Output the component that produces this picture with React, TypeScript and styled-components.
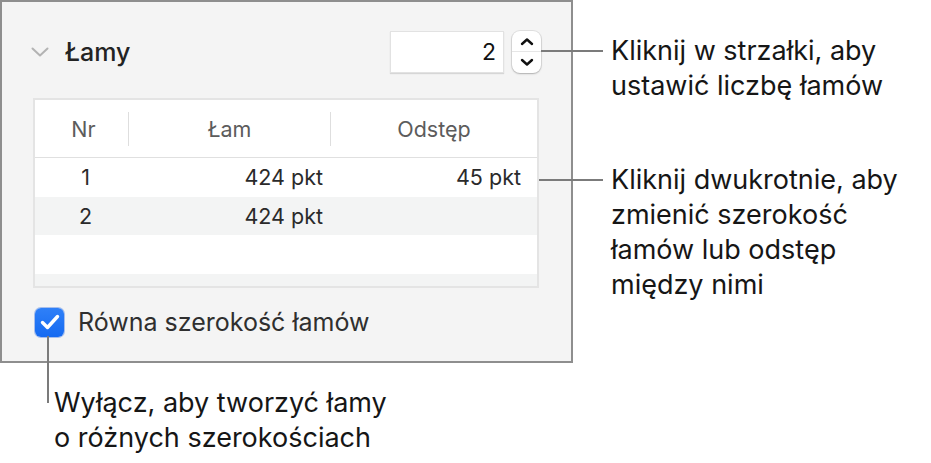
import React from "react";
import styled, { createGlobalStyle } from "styled-components";

const Global = createGlobalStyle`
  html, body { margin: 0; padding: 0; background: #ffffff; }
  body { font-family: Inter, "Noto Sans", "Liberation Sans", sans-serif; -webkit-font-smoothing: antialiased; }
  * { box-sizing: border-box; }
`;

const Page = styled.div`
  width: 931px;
  height: 463px;
  display: grid;
  grid-template-columns: 573px 1fr;
  grid-template-rows: 363px 1fr;
  overflow: hidden;
`;

const Panel = styled.section`
  grid-column: 1;
  grid-row: 1;
  border: 2px solid #8e8e8e;
  background: #f4f4f4;
  padding: 29px 30px 0 29px;
  display: flex;
  flex-direction: column;
`;

const Header = styled.div`
  display: flex;
  align-items: center;
  height: 42px;
`;

const Disclosure = styled.svg`
  width: 18px;
  height: 10px;
  margin-right: 16px;
  flex: none;
`;

const Title = styled.h2`
  margin: 0;
  font-size: 25px;
  font-weight: 500;
  color: #232323;
  flex: 1;
`;

const NumberField = styled.div`
  width: 114px;
  height: 42px;
  background: #fff;
  border: 1px solid #e2e2e2;
  box-shadow: 0 1px 1px rgba(0, 0, 0, 0.12);
  display: flex;
  align-items: center;
  justify-content: flex-end;
  padding-right: 7px;
  font-size: 23px;
  color: #111;
`;

const Stepper = styled.div`
  width: 29px;
  height: 42px;
  margin-left: 8px;
  background: #fff;
  border-radius: 8px;
  box-shadow: 0 0 0 1px rgba(0, 0, 0, 0.08), 0 1px 2px rgba(0, 0, 0, 0.22);
  display: grid;
  grid-template-rows: 1fr 1fr;
  overflow: hidden;
`;

const StepHalf = styled.div<{ $top?: boolean }>`
  display: flex;
  align-items: center;
  justify-content: center;
  border-bottom: ${(p) => (p.$top ? "1px solid #e6e6e6" : "none")};
`;

const Table = styled.div`
  margin: 25px 0 0 2px;
  width: 506px;
  height: 190px;
  border: 2px solid #e4e4e4;
  background: #fff;
  display: flex;
  flex-direction: column;
  overflow: hidden;
`;

const Row = styled.div<{ $stripe?: boolean; $head?: boolean }>`
  display: grid;
  grid-template-columns: 93px 202px 1fr;
  align-items: center;
  height: ${(p) => (p.$head ? "58px" : "38.5px")};
  flex: none;
  background: ${(p) => (p.$stripe ? "#f3f4f4" : "#fff")};
  border-bottom: ${(p) => (p.$head ? "1px solid #e0e0e0" : "none")};
  font-size: 21.5px;
  color: ${(p) => (p.$head ? "#5c5c5c" : "#2a2a2a")};
`;

const Cell = styled.div<{ $align: "center" | "right"; $pr?: number; $pl?: number; $divider?: boolean }>`
  text-align: ${(p) => p.$align};
  padding-right: ${(p) => p.$pr ?? 0}px;
  padding-left: ${(p) => p.$pl ?? 0}px;
  white-space: nowrap;
  line-height: 34px;
  border-left: ${(p) => (p.$divider ? "1px solid #dedede" : "none")};
`;

const CheckRow = styled.label`
  display: flex;
  align-items: center;
  margin: 19px 0 0 4px;
  gap: 14px;
  font-size: 25px;
  color: #2f2f2f;
`;

const CheckBox = styled.span`
  width: 29px;
  height: 29px;
  border-radius: 6px;
  background: linear-gradient(#2f80f8, #156af1);
  box-shadow: 0 0 0 1px rgba(20, 90, 220, 0.35);
  display: flex;
  align-items: center;
  justify-content: center;
  flex: none;
`;

const RightNotes = styled.div`
  grid-column: 2;
  grid-row: 1;
  display: flex;
  flex-direction: column;
`;

const Note = styled.div<{ $shift: number; $top: number }>`
  display: flex;
  align-items: flex-start;
  margin-left: ${(p) => -p.$shift}px;
  margin-top: ${(p) => p.$top}px;
  position: relative;
  z-index: 1;
`;

const HLeader = styled.span<{ $w: number }>`
  width: ${(p) => p.$w}px;
  height: 2px;
  background: #7b7b7b;
  margin-top: 17px;
  flex: none;
`;

const NoteText = styled.p`
  margin: 0 0 0 8px;
  font-size: 27px;
  line-height: 35px;
  color: #161616;
`;

const BottomNote = styled.div`
  grid-column: 1 / -1;
  grid-row: 2;
  display: flex;
  align-items: flex-start;
  padding-left: 47px;
  position: relative;
  z-index: 1;
`;

const VLeader = styled.span`
  width: 2px;
  height: 67px;
  margin-top: -27px;
  background: #7b7b7b;
  flex: none;
`;

const BottomText = styled(NoteText)`
  margin: 22px 0 0 5px;
`;

export default function App() {
  return (
    <>
      <Global />
      <Page>
        <Panel>
          <Header>
            <Disclosure viewBox="0 0 18 10">
              <path d="M1.5 1.5 L9 8.5 L16.5 1.5" fill="none" stroke="#b3b3b3" strokeWidth="2" strokeLinecap="round" strokeLinejoin="round" />
            </Disclosure>
            <Title>Łamy</Title>
            <NumberField>2</NumberField>
            <Stepper>
              <StepHalf $top>
                <svg width="14" height="9" viewBox="0 0 14 9">
                  <path d="M2 7 L7 2.5 L12 7" fill="none" stroke="#111" strokeWidth="2.4" strokeLinecap="round" strokeLinejoin="round" />
                </svg>
              </StepHalf>
              <StepHalf>
                <svg width="14" height="9" viewBox="0 0 14 9">
                  <path d="M2 2 L7 6.5 L12 2" fill="none" stroke="#111" strokeWidth="2.4" strokeLinecap="round" strokeLinejoin="round" />
                </svg>
              </StepHalf>
            </Stepper>
          </Header>
          <Table>
            <Row $head>
              <Cell $align="center" $pl={4}>Nr</Cell>
              <Cell $align="center" $divider>Łam</Cell>
              <Cell $align="center" $divider>Odstęp</Cell>
            </Row>
            <Row>
              <Cell $align="center" $pl={8}>1</Cell>
              <Cell $align="right" $pr={7}>424 pkt</Cell>
              <Cell $align="right" $pr={16}>45 pkt</Cell>
            </Row>
            <Row $stripe>
              <Cell $align="center" $pl={8}>2</Cell>
              <Cell $align="right" $pr={7}>424 pkt</Cell>
              <Cell $align="right" $pr={16}></Cell>
            </Row>
            <Row />
            <Row $stripe />
          </Table>
          <CheckRow>
            <CheckBox>
              <svg width="22" height="18" viewBox="0 0 22 18">
                <path d="M3.5 9.5 L8.5 14.5 L18.5 3.5" fill="none" stroke="#fff" strokeWidth="3.4" strokeLinecap="round" strokeLinejoin="round" />
              </svg>
            </CheckBox>
            Równa szerokość łamów
          </CheckRow>
        </Panel>
        <RightNotes>
          <Note $shift={32} $top={33}>
            <HLeader $w={62} />
            <NoteText>
              Kliknij w strzałki, aby
              <br />
              ustawić liczbę łamów
            </NoteText>
          </Note>
          <Note $shift={34} $top={59}>
            <HLeader $w={64} />
            <NoteText>
              Kliknij dwukrotnie, aby
              <br />
              zmienić szerokość
              <br />
              łamów lub odstęp
              <br />
              między nimi
            </NoteText>
          </Note>
        </RightNotes>
        <BottomNote>
          <VLeader />
          <BottomText>
            Wyłącz, aby tworzyć łamy
            <br />
            o różnych szerokościach
          </BottomText>
        </BottomNote>
      </Page>
    </>
  );
}
